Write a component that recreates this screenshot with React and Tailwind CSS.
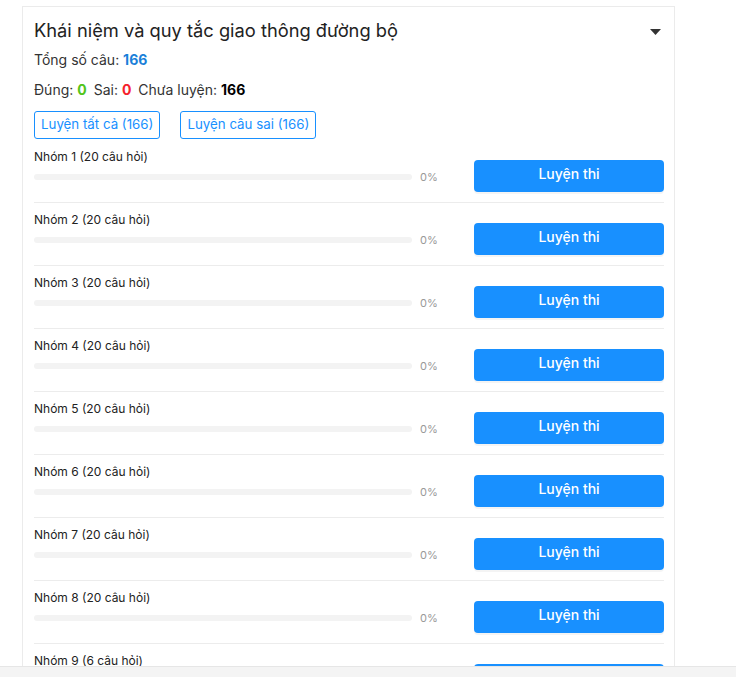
import React from "react";

const groups = [
  "Nhóm 1 (20 câu hỏi)",
  "Nhóm 2 (20 câu hỏi)",
  "Nhóm 3 (20 câu hỏi)",
  "Nhóm 4 (20 câu hỏi)",
  "Nhóm 5 (20 câu hỏi)",
  "Nhóm 6 (20 câu hỏi)",
  "Nhóm 7 (20 câu hỏi)",
  "Nhóm 8 (20 câu hỏi)",
  "Nhóm 9 (6 câu hỏi)",
];

function Row({ label }) {
  return (
    <div className="flex items-start border-b border-[#ececec] pt-[8px] pb-[10px]">
      <div className="flex-1 flex flex-col">
        <div className="text-[12px] leading-[18px] text-[#222]">{label}</div>
        <div className="flex items-center h-[22px]">
          <div className="w-[378px] h-[6px] rounded-full bg-[#f3f3f3]"></div>
          <span className="ml-[8px] text-[11px] text-[#999]">0%</span>
        </div>
      </div>
      <button className="mt-[12px] w-[190px] h-[32px] rounded-[4px] bg-[#1890ff] text-white text-[14px] font-medium leading-[28px] pb-[4px] shadow-[0_2px_0_rgba(0,0,0,0.045)]">
        Luyện thi
      </button>
    </div>
  );
}

export default function App() {
  return (
    <div className="h-[677px] overflow-hidden flex flex-col bg-white font-['Inter',sans-serif]">
      <div className="flex-1 overflow-hidden pt-[6px] pl-[22px]">
        <div className="w-[653px] border border-[#ebebeb] pl-[11px] pr-[10px] pt-[9px]">
          <div className="flex items-center justify-between">
            <h2 className="text-[18.3px] leading-[28px] text-[#222]">
              Khái niệm và quy tắc giao thông đường bộ
            </h2>
            <svg width="11" height="6" viewBox="0 0 11 6" className="mr-[3px] mt-[4px]">
              <path d="M0 0h11L5.5 6z" fill="#333" />
            </svg>
          </div>
          <div className="mt-[6px] text-[14px] leading-[20px] text-[#333]">
            Tổng số câu: <span className="font-bold text-[#1a7fd9]">166</span>
          </div>
          <div className="mt-[10px] text-[14px] leading-[20px] text-[#333]">
            Đúng: <span className="font-bold text-[#52c41a]">0</span>
            <span className="ml-[7px]">Sai: </span>
            <span className="font-bold text-[#f5222d]">0</span>
            <span className="ml-[7px]">Chưa luyện: </span>
            <span className="font-bold text-black">166</span>
          </div>
          <div className="mt-[11px] flex gap-[20px]">
            <button className="h-[28px] px-[6px] rounded-[3px] border border-[#1890ff] text-[13.3px] text-[#1890ff]">
              Luyện tất cả (166)
            </button>
            <button className="h-[28px] px-[6px] rounded-[3px] border border-[#1890ff] text-[13.3px] text-[#1890ff]">
              Luyện câu sai (166)
            </button>
          </div>
          <div className="mt-[1px]">
            {groups.map((g) => (
              <Row key={g} label={g} />
            ))}
          </div>
        </div>
      </div>
      <div className="h-[11px] shrink-0 bg-[#f4f4f4] border-t border-[#e6e6e6]"></div>
    </div>
  );
}
